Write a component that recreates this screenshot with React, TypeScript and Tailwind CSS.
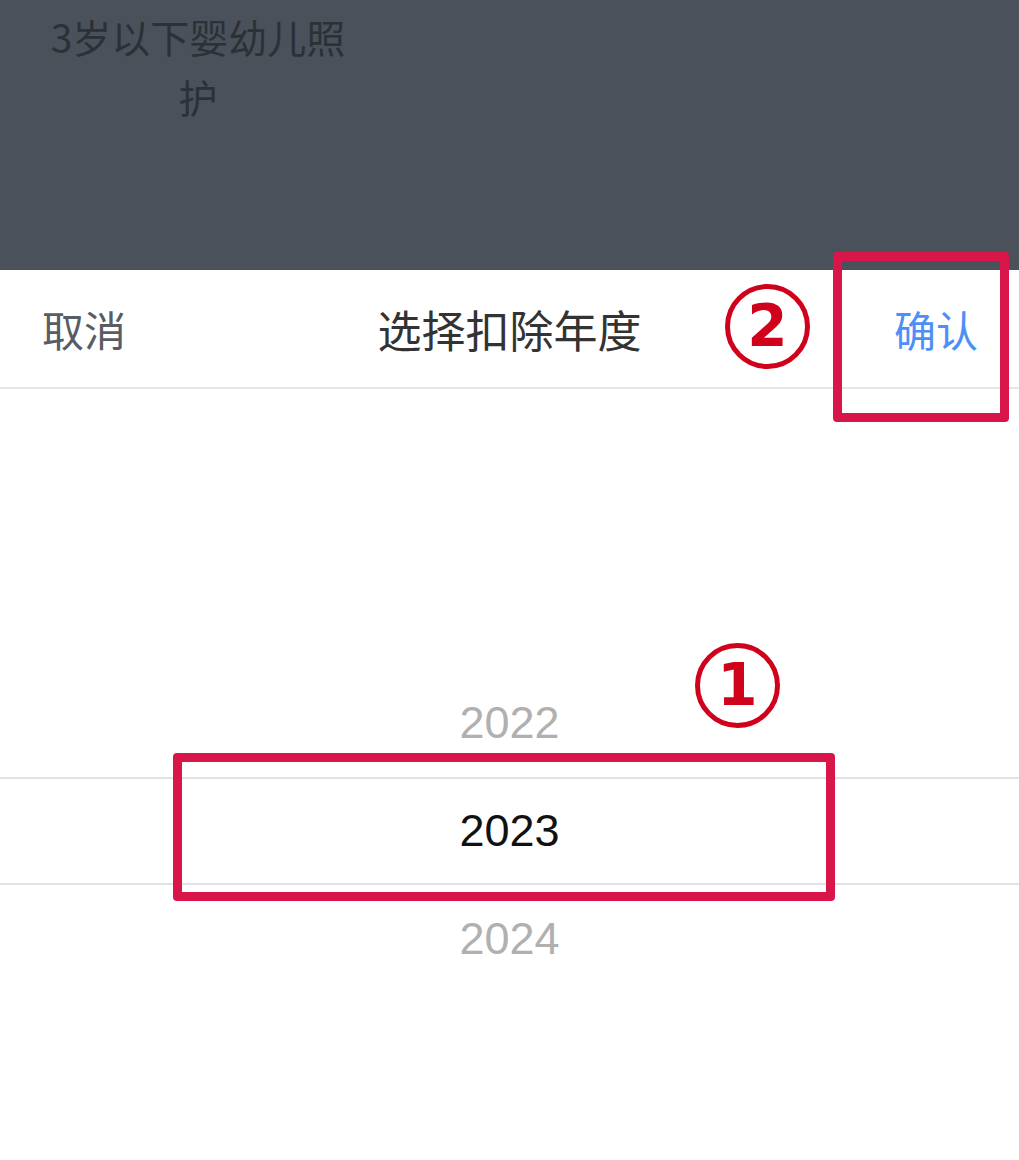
import React from "react";

const cjk = { fontFamily: '"Noto Sans CJK SC", "Noto Sans", sans-serif' };
const latin = { fontFamily: '"Liberation Sans", Arial, sans-serif' };

function Marker({ n, left, top }: { n: string; left: number; top: number }) {
  return (
    <div
      className="absolute w-[85px] h-[85px] rounded-full border-[5px] border-[#d0021b] flex items-center justify-center"
      style={{ left, top }}
    >
      <span
        className="text-[58px] leading-none font-bold text-[#d0021b] -mt-[2px]"
        style={{ fontFamily: '"DejaVu Sans", sans-serif' }}
      >
        {n}
      </span>
    </div>
  );
}

export default function App() {
  const years = [
    { label: "2022", active: false },
    { label: "2023", active: true },
    { label: "2024", active: false },
  ];

  return (
    <div className="relative w-[1019px] h-[1160px] bg-white overflow-hidden">
      {/* dimmed page behind the sheet */}
      <div className="h-[270px] bg-[#4b515b] pt-[6px]" style={cjk}>
        <div className="w-[396px] text-center text-[39px] leading-[60px] text-[#2c3037]">
          <div>3岁以下婴幼儿照</div>
          <div>护</div>
        </div>
      </div>

      {/* sheet header */}
      <header
        className="relative h-[119px] flex items-center justify-between pl-[42px] pr-[41px] border-b-2 border-[#e6e6e6]"
        style={cjk}
      >
        <span className="text-[42px] text-[#585c64]">取消</span>
        <span className="absolute left-1/2 -translate-x-1/2 text-[44px] text-[#333333]">
          选择扣除年度
        </span>
        <span className="text-[42px] text-[#4d8ff6]">确认</span>
      </header>

      {/* year wheel */}
      <div className="pt-[280px]" style={latin}>
        {years.map((y) => (
          <div
            key={y.label}
            className={
              y.active
                ? "h-[108px] flex items-center justify-center border-y-2 border-[#e2e2e2] text-[45px] text-[#111111]"
                : "h-[108px] flex items-center justify-center text-[45px] text-[#b0b0b0]"
            }
          >
            {y.label}
          </div>
        ))}
      </div>

      {/* annotations */}
      <div className="absolute left-[833px] top-[252px] w-[176px] h-[170px] border-[9px] border-[#d9164a] rounded-[4px]" />
      <div className="absolute left-[173px] top-[753px] w-[662px] h-[148px] border-[9px] border-[#d9164a] rounded-[4px]" />
      <Marker n="2" left={725} top={284} />
      <Marker n="1" left={695} top={643} />
    </div>
  );
}
